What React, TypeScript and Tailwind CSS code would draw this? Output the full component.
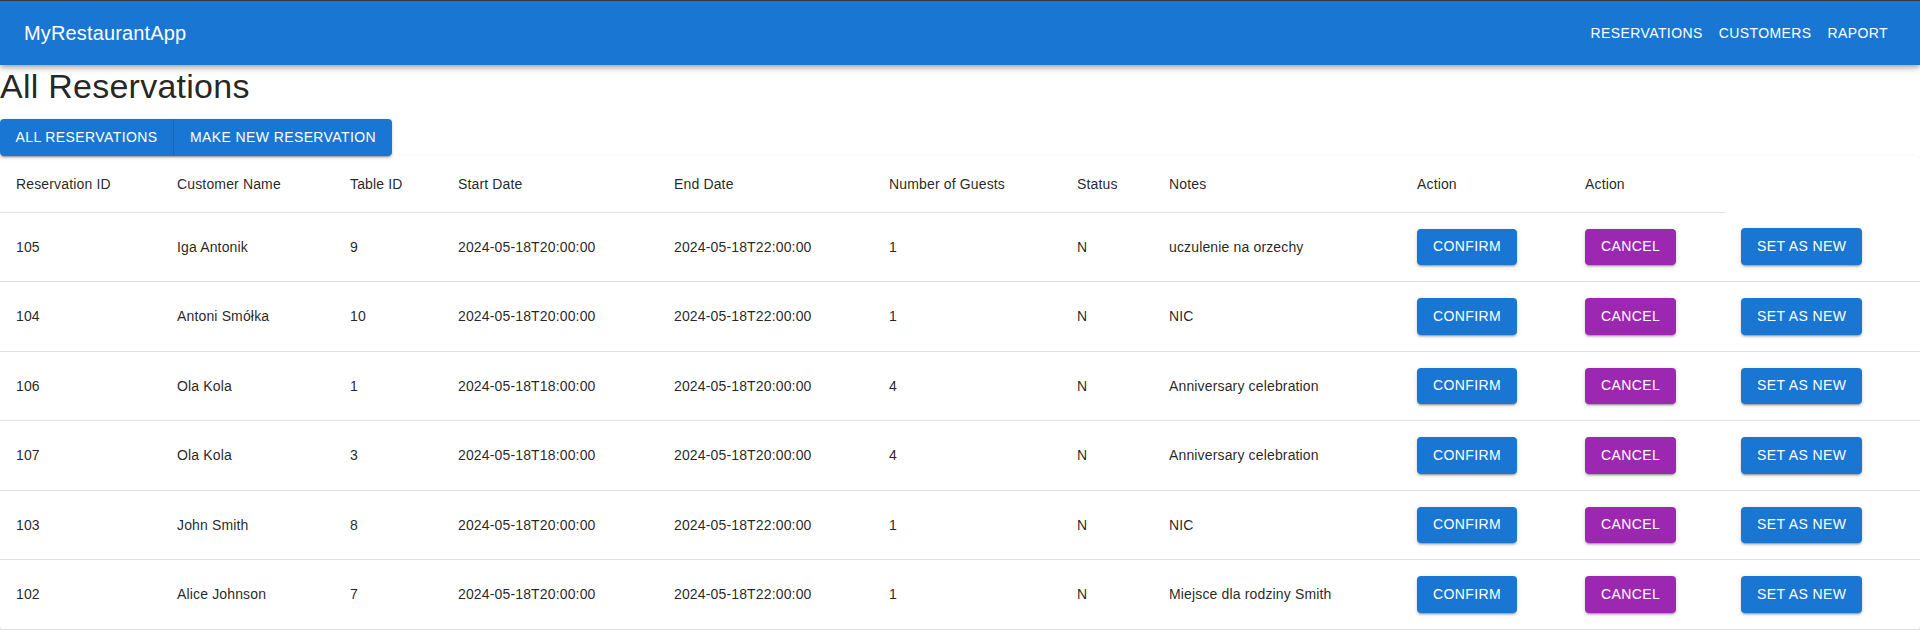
type Reservation = {
  id: number;
  customer: string;
  table: number;
  start: string;
  end: string;
  guests: number;
  status: string;
  notes: string;
};

const reservations: Reservation[] = [
  { id: 105, customer: "Iga Antonik", table: 9, start: "2024-05-18T20:00:00", end: "2024-05-18T22:00:00", guests: 1, status: "N", notes: "uczulenie na orzechy" },
  { id: 104, customer: "Antoni Smółka", table: 10, start: "2024-05-18T20:00:00", end: "2024-05-18T22:00:00", guests: 1, status: "N", notes: "NIC" },
  { id: 106, customer: "Ola Kola", table: 1, start: "2024-05-18T18:00:00", end: "2024-05-18T20:00:00", guests: 4, status: "N", notes: "Anniversary celebration" },
  { id: 107, customer: "Ola Kola", table: 3, start: "2024-05-18T18:00:00", end: "2024-05-18T20:00:00", guests: 4, status: "N", notes: "Anniversary celebration" },
  { id: 103, customer: "John Smith", table: 8, start: "2024-05-18T20:00:00", end: "2024-05-18T22:00:00", guests: 1, status: "N", notes: "NIC" },
  { id: 102, customer: "Alice Johnson", table: 7, start: "2024-05-18T20:00:00", end: "2024-05-18T22:00:00", guests: 1, status: "N", notes: "Miejsce dla rodziny Smith" },
];

const headers = [
  "Reservation ID",
  "Customer Name",
  "Table ID",
  "Start Date",
  "End Date",
  "Number of Guests",
  "Status",
  "Notes",
  "Action",
  "Action",
];

// column widths as laid out by the browser in the original table
const colWidths = ["w-[161px]", "w-[173px]", "w-[108px]", "w-[216px]", "w-[215px]", "w-[188px]", "w-[92px]", "w-[248px]", "w-[168px]", "w-[156px]", "w-auto"];

const btnShadow =
  "shadow-[0px_3px_1px_-2px_rgba(0,0,0,0.2),0px_2px_2px_0px_rgba(0,0,0,0.14),0px_1px_5px_0px_rgba(0,0,0,0.12)]";

function ActionButton({ label, color }: { label: string; color: "primary" | "secondary" }) {
  return (
    <button
      className={`h-[36.5px] rounded px-4 text-[14px] font-normal uppercase tracking-[0.4px] text-white ${btnShadow} ${
        color === "primary" ? "bg-[#1976d2]" : "bg-[#9c27b0]"
      }`}
    >
      {label}
    </button>
  );
}

export default function App() {
  return (
    <div className="font-['Liberation_Sans',Arial,sans-serif] text-[rgba(0,0,0,0.87)]">
      {/* App bar */}
      <div className="h-px bg-[#3a3e42]" />
      <header className="relative z-10 flex h-16 items-center bg-[#1976d2] px-6 text-white shadow-[0px_2px_4px_-1px_rgba(0,0,0,0.2),0px_4px_5px_0px_rgba(0,0,0,0.14),0px_1px_10px_0px_rgba(0,0,0,0.12)]">
        <h6 className="text-[20px] font-normal leading-[1.6] tracking-[0.15px]">MyRestaurantApp</h6>
        <nav className="ml-auto flex items-center">
          {["Reservations", "Customers", "Raport"].map((item) => (
            <button key={item} className="min-w-16 px-2 py-[6px] text-[14px] font-normal uppercase leading-[1.75] tracking-[0.4px]">
              {item}
            </button>
          ))}
        </nav>
      </header>

      {/* Title */}
      <h4 className="mb-[12px] text-[34px] leading-[42px] tracking-[0.25px]">All Reservations</h4>

      {/* Button group */}
      <div className={`inline-flex rounded ${btnShadow}`}>
        <button className="h-[36.5px] w-[174px] rounded-l border-r border-[#1565c0] bg-[#1976d2] text-[14px] font-normal uppercase tracking-[0.4px] text-white">
          All Reservations
        </button>
        <button className="h-[36.5px] w-[218px] rounded-r bg-[#1976d2] text-[14px] font-normal uppercase tracking-[0.4px] text-white">
          Make New Reservation
        </button>
      </div>

      {/* Table */}
      <div className="w-full overflow-hidden rounded bg-white shadow-[0px_2px_1px_-1px_rgba(0,0,0,0.2),0px_1px_1px_0px_rgba(0,0,0,0.14),0px_1px_3px_0px_rgba(0,0,0,0.12)]">
        <table className="w-full table-fixed border-collapse text-left text-[14px]">
          <colgroup>
            {colWidths.map((w, i) => (
              <col key={i} className={w} />
            ))}
          </colgroup>
          <thead>
            <tr>
              {headers.map((h, i) => (
                <th key={i} className="border-b border-[#e0e0e0] px-4 py-4 font-normal leading-6 tracking-[0.15px]">
                  {h}
                </th>
              ))}
            </tr>
          </thead>
          <tbody>
            {reservations.map((r) => (
              <tr key={r.id}>
                {[r.id, r.customer, r.table, r.start, r.end, r.guests, r.status, r.notes].map((v, i) => (
                  <td key={i} className="border-b border-[#e0e0e0] px-4 py-4 leading-[1.43] tracking-[0.15px]">
                    {v}
                  </td>
                ))}
                <td className="border-b border-[#e0e0e0] px-4 py-4">
                  <ActionButton label="Confirm" color="primary" />
                </td>
                <td className="border-b border-[#e0e0e0] px-4 py-4">
                  <ActionButton label="Cancel" color="secondary" />
                </td>
                <td className="border-b border-[#e0e0e0] px-4 py-4">
                  <ActionButton label="Set as new" color="primary" />
                </td>
              </tr>
            ))}
          </tbody>
        </table>
      </div>
    </div>
  );
}
